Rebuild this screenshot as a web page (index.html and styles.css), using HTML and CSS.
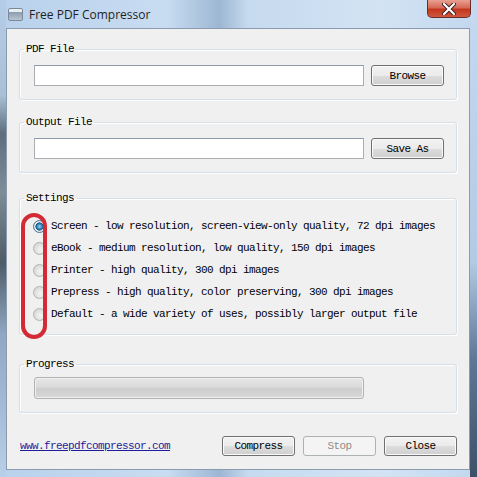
FILE: index.html
```html
<!DOCTYPE html>
<html lang="en">
<head>
    <meta charset="UTF-8">
    <title>Free PDF Compressor</title>
    <link rel="stylesheet" href="styles.css">
</head>
<body>

    <div class="window">
        <div class="titlebar">
            <span class="app-icon"></span>
            <span class="title">Free PDF Compressor</span>
            <span class="close-x">
                <svg width="16" height="12" viewBox="0 0 16 12">
                    <path d="M3 1 L13 11 M13 1 L3 11" stroke="#3b1f1f" stroke-width="4" stroke-linecap="round"/>
                    <path d="M3 1 L13 11 M13 1 L3 11" stroke="#ffffff" stroke-width="2.2" stroke-linecap="round"/>
                </svg>
            </span>
        </div>

        <div class="client">
            <fieldset class="group group-file">
                <legend>PDF File</legend>
                <div class="file-row">
                    <input type="text" class="text-field">
                    <button class="button">Browse</button>
                </div>
            </fieldset>

            <fieldset class="group group-output">
                <legend>Output File</legend>
                <div class="file-row">
                    <input type="text" class="text-field">
                    <button class="button">Save As</button>
                </div>
            </fieldset>

            <fieldset class="group group-settings">
                <legend>Settings</legend>
                <div class="options">
                    <label class="option"><span class="radio checked"></span>Screen - low resolution, screen-view-only quality, 72 dpi images</label>
                    <label class="option"><span class="radio"></span>eBook - medium resolution, low quality, 150 dpi images</label>
                    <label class="option"><span class="radio"></span>Printer - high quality, 300 dpi images</label>
                    <label class="option"><span class="radio"></span>Prepress - high quality, color preserving, 300 dpi images</label>
                    <label class="option"><span class="radio"></span>Default - a wide variety of uses, possibly larger output file</label>
                </div>
                <div class="highlight"></div>
            </fieldset>

            <fieldset class="group group-progress">
                <legend>Progress</legend>
                <div class="progress"></div>
            </fieldset>

            <div class="bottom-bar">
                <a href="#" class="site-link">www.freepdfcompressor.com</a>
                <div class="actions">
                    <button class="button">Compress</button>
                    <button class="button" disabled>Stop</button>
                    <button class="button">Close</button>
                </div>
            </div>
        </div>
    </div>

</body>
</html>
```

FILE: styles.css
```css
body {
    margin: 0;
    padding: 0;
    background: #6d8198;
}

.window {
    width: 477px;
    height: 477px;
    box-sizing: border-box;
    display: flex;
    flex-direction: column;
    padding: 0 7px 7px 6px;
    background:
        linear-gradient(#b6cde8 0%, #aac0d6 20%, #5e6e7e 28%, #7f8d99 40%, #4f5c68 55%, #8fa7c2 70%, #b8cfe8 100%) left top / 6px 100% no-repeat,
        linear-gradient(#c5daf0 0%, #b3cae4 55%, #5f7896 75%, #3d5068 100%) right top / 7px 100% no-repeat,
        linear-gradient(to right, #b9d1ec 0%, #c8dcf1 35%, #a9c1dc 43%, #9db6d3 46%, #c6daef 52%, #d3e3f4 80%, #c2d7ee 100%);
}

.titlebar {
    height: 28px;
    display: flex;
    align-items: center;
    position: relative;
    margin-right: -7px;
}

.app-icon {
    width: 13px;
    height: 11px;
    margin: 1px 0 0 2px;
    border-radius: 2px;
    border: 1px solid #7b8a99;
    background: linear-gradient(#e9eef3 0%, #e9eef3 30%, #8e9eae 31%, #b9c5d1 100%);
}

.title {
    font-family: "Open Sans", sans-serif;
    font-size: 12px;
    color: #1e1e1e;
    margin-left: 6px;
    margin-top: 1px;
}

.close-x {
    position: absolute;
    top: 0;
    right: 6px;
    width: 44px;
    height: 18px;
    box-sizing: border-box;
    border: 1px solid #6b2b2b;
    border-top: none;
    border-radius: 0 0 5px 5px;
    background: linear-gradient(#e8a193 0%, #d66a57 45%, #c2361f 55%, #d0583e 100%);
    display: flex;
    justify-content: center;
    align-items: center;
}

.client {
    flex: 1;
    background: #f0f0f0;
    border: 1px solid #8a9bae;
    padding: 0 12px;
    font-family: "Liberation Mono", monospace;
    font-size: 11px;
    letter-spacing: -0.6px;
    color: #000;
    position: relative;
}

.group {
    margin: 0;
    padding: 9px 12px 13px 14px;
    border: 1px solid #d5dfe5;
    border-radius: 3px;
    box-shadow: inset 1px 1px 0 #ffffff, 1px 1px 0 #ffffff;
    position: relative;
}

.group legend {
    padding: 0 2px;
    margin-left: -10px;
    line-height: 14px;
}

.group-file {
    margin-top: 13px;
}

.group-output {
    margin-top: 15px;
    padding-top: 9px;
}

.group-settings {
    margin-top: 18px;
    padding-top: 10px;
    padding-bottom: 9px;
    padding-left: 13px;
}

.group-settings legend {
    margin-left: -9px;
}

.group-progress {
    margin-top: 22px;
    padding-top: 6px;
    padding-bottom: 13px;
}

.file-row {
    display: flex;
    gap: 7px;
}

.text-field {
    width: 330px;
    height: 21px;
    box-sizing: border-box;
    margin: 0;
    border: 1px solid #abadb3;
    border-top-color: #8e9bab;
    background: #ffffff;
}

.button {
    width: 73px;
    height: 21px;
    box-sizing: border-box;
    margin: 0;
    padding: 0;
    font-family: "Liberation Mono", monospace;
    font-size: 11px;
    letter-spacing: -0.6px;
    color: #000;
    border: 1px solid #707070;
    border-radius: 3px;
    background: linear-gradient(#f2f2f2 0%, #ebebeb 50%, #dddddd 51%, #cfcfcf 100%);
    box-shadow: inset 0 0 0 1px #fafafa;
}

.button:disabled {
    color: #8d8d8d;
    border-color: #adb2b5;
    background: #f4f4f4;
    box-shadow: none;
}

.options {
    display: flex;
    flex-direction: column;
}

.option {
    height: 22px;
    display: flex;
    align-items: center;
    gap: 5px;
}

.radio {
    width: 13px;
    height: 13px;
    box-sizing: border-box;
    border-radius: 50%;
    border: 1px solid #b2b2b2;
    background: radial-gradient(circle at 60% 60%, #f4f4f4 0%, #e2e2e2 50%, #cfcfcf 100%);
    flex: none;
}

.radio.checked {
    border-color: #4f6f8c;
    background: radial-gradient(circle at 50% 50%, #8fd6f7 0%, #2d7fb5 35%, #1a4d74 50%, #e8eef3 55%, #d3dde6 100%);
}

.highlight {
    position: absolute;
    left: 1px;
    top: 8px;
    width: 26px;
    height: 126px;
    box-sizing: border-box;
    border: 4px solid #d42a35;
    border-radius: 13px;
}

.progress {
    width: 330px;
    height: 22px;
    box-sizing: border-box;
    border: 1px solid #b2b2b2;
    border-radius: 3px;
    background: linear-gradient(#e6e6e6 0%, #dadada 45%, #cdcdcd 55%, #d8d8d8 100%);
    box-shadow: inset 0 0 0 1px #f0f0f0;
}

.bottom-bar {
    display: flex;
    justify-content: space-between;
    align-items: center;
    margin-top: 23px;
}

.site-link {
    color: #1d1d9c;
    margin-left: 1px;
}

.actions {
    display: flex;
    gap: 8px;
}

.actions .button {
    height: 20px;
}
```
